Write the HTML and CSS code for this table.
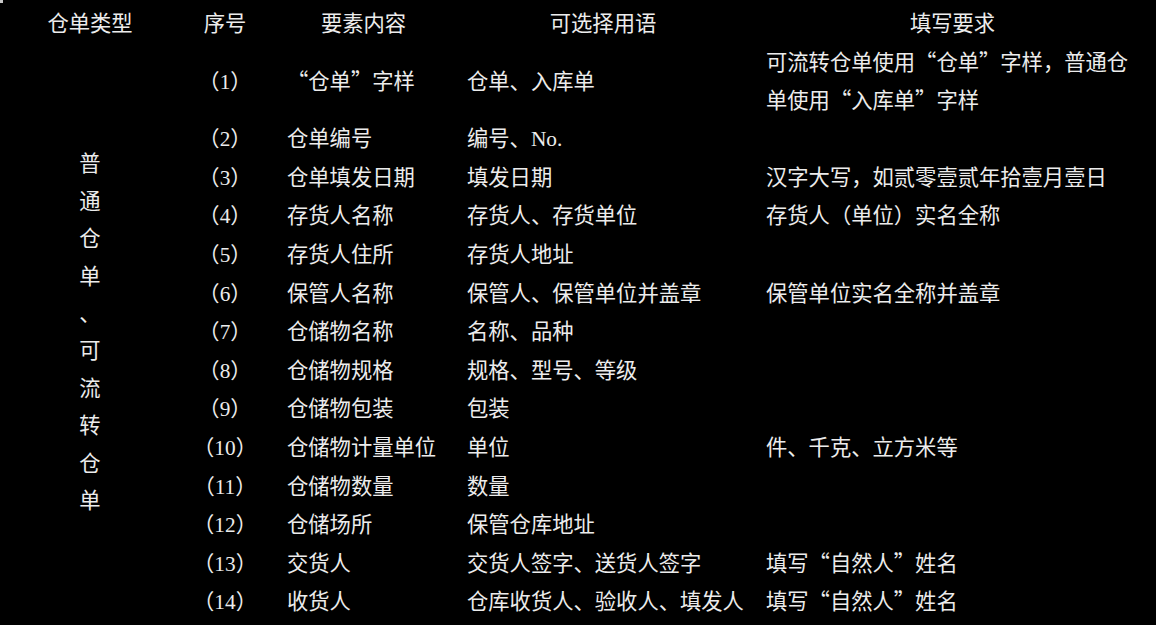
FILE: index.html
```html
<!DOCTYPE html>
<html lang="zh-CN">
<head>
<meta charset="utf-8">
<title>仓单要素</title>
<link rel="stylesheet" href="styles.css">
</head>
<body>
<div class="corner"></div>
<table class="sheet">
  <colgroup>
    <col class="c-type">
    <col class="c-no">
    <col class="c-elem">
    <col class="c-term">
    <col class="c-req">
  </colgroup>
  <thead>
    <tr>
      <th>仓单类型</th>
      <th>序号</th>
      <th>要素内容</th>
      <th>可选择用语</th>
      <th>填写要求</th>
    </tr>
  </thead>
  <tbody>
    <tr>
      <td class="type" rowspan="14">普<br>通<br>仓<br>单<br>、<br>可<br>流<br>转<br>仓<br>单</td>
      <td class="no">（<span class="num">1</span>）</td>
      <td class="elem"><span class="qo">“</span>仓单<span class="qc">”</span>字样</td>
      <td class="term">仓单、入库单</td>
      <td class="req">可流转仓单使用<span class="qo">“</span>仓单<span class="qc">”</span>字样，普通仓<br>单使用<span class="qo">“</span>入库单<span class="qc">”</span>字样</td>
    </tr>
    <tr><td class="no">（<span class="num">2</span>）</td><td class="elem">仓单编号</td><td class="term">编号、<span class="num">No.</span></td><td class="req"></td></tr>
    <tr><td class="no">（<span class="num">3</span>）</td><td class="elem">仓单填发日期</td><td class="term">填发日期</td><td class="req">汉字大写，如贰零壹贰年拾壹月壹日</td></tr>
    <tr><td class="no">（<span class="num">4</span>）</td><td class="elem">存货人名称</td><td class="term">存货人、存货单位</td><td class="req">存货人（单位）实名全称</td></tr>
    <tr><td class="no">（<span class="num">5</span>）</td><td class="elem">存货人住所</td><td class="term">存货人地址</td><td class="req"></td></tr>
    <tr><td class="no">（<span class="num">6</span>）</td><td class="elem">保管人名称</td><td class="term">保管人、保管单位并盖章</td><td class="req">保管单位实名全称并盖章</td></tr>
    <tr><td class="no">（<span class="num">7</span>）</td><td class="elem">仓储物名称</td><td class="term">名称、品种</td><td class="req"></td></tr>
    <tr><td class="no">（<span class="num">8</span>）</td><td class="elem">仓储物规格</td><td class="term">规格、型号、等级</td><td class="req"></td></tr>
    <tr><td class="no">（<span class="num">9</span>）</td><td class="elem">仓储物包装</td><td class="term">包装</td><td class="req"></td></tr>
    <tr><td class="no">（<span class="num">10</span>）</td><td class="elem">仓储物计量单位</td><td class="term">单位</td><td class="req">件、千克、立方米等</td></tr>
    <tr><td class="no">（<span class="num">11</span>）</td><td class="elem">仓储物数量</td><td class="term">数量</td><td class="req"></td></tr>
    <tr><td class="no">（<span class="num">12</span>）</td><td class="elem">仓储场所</td><td class="term">保管仓库地址</td><td class="req"></td></tr>
    <tr><td class="no">（<span class="num">13</span>）</td><td class="elem">交货人</td><td class="term">交货人签字、送货人签字</td><td class="req">填写<span class="qo">“</span>自然人<span class="qc">”</span>姓名</td></tr>
    <tr><td class="no">（<span class="num">14</span>）</td><td class="elem">收货人</td><td class="term">仓库收货人、验收人、填发人</td><td class="req">填写<span class="qo">“</span>自然人<span class="qc">”</span>姓名</td></tr>
  </tbody>
</table>
</body>
</html>
```
FILE: styles.css
```css
html, body {
  margin: 0;
  padding: 0;
  background: #000;
}

body {
  width: 1156px;
  height: 625px;
  overflow: hidden;
  color: #ececec;
  font-family: "Noto Sans CJK SC", sans-serif;
  font-size: 21.3px;
}

.corner {
  width: 3px;
  height: 3px;
  background: #c8c8c8;
}

.sheet {
  width: 1156px;
  table-layout: fixed;
  border-collapse: collapse;
  border-spacing: 0;
}

.c-type { width: 180px; }
.c-no { width: 90px; }
.c-elem { width: 187px; }
.c-term { width: 292px; }
.c-req { width: 407px; }

.sheet th {
  font-weight: 400;
  text-align: center;
  line-height: 37.4px;
  padding: 0 0 1.2px;
  white-space: nowrap;
}

.sheet td {
  line-height: 37.4px;
  padding: 0.6px 0;
  vertical-align: middle;
  text-align: left;
}

.sheet td.type {
  text-align: center;
}

.sheet td.no {
  text-align: center;
  white-space: nowrap;
}

.sheet td.elem {
  padding-left: 17px;
  white-space: nowrap;
}

.sheet td.term {
  padding-left: 10px;
  white-space: nowrap;
}

.sheet td.req {
  padding-left: 17px;
  padding-right: 0;
  white-space: nowrap;
}

.num {
  font-family: "Liberation Serif", serif;
  line-height: 1;
}

.qo,
.qc {
  display: inline-block;
  width: 1em;
}

.qo {
  text-align: right;
}

.qc {
  text-align: left;
}
```
